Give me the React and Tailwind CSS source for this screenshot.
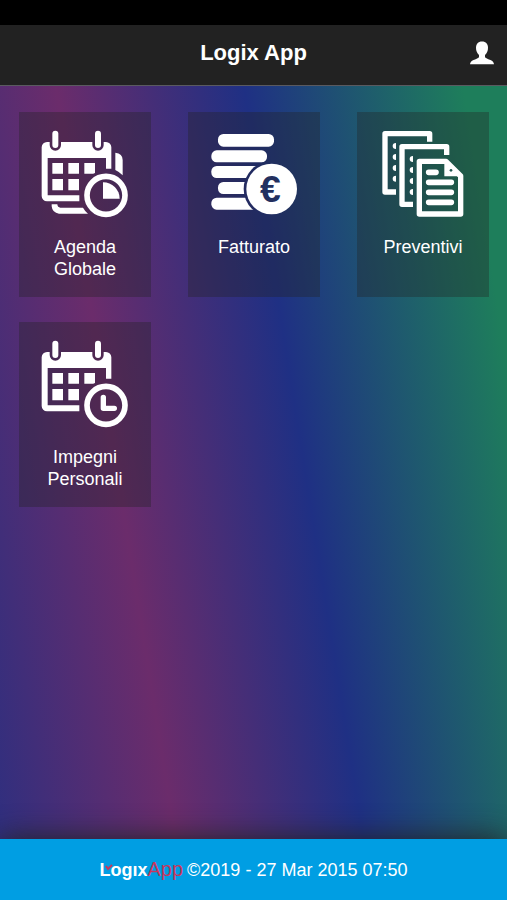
import React from "react";

const tiles = [
  { id: "agenda", label: "Agenda Globale", Icon: AgendaIcon },
  { id: "fatturato", label: "Fatturato", Icon: CoinsIcon },
  { id: "preventivi", label: "Preventivi", Icon: DocsIcon },
  { id: "impegni", label: "Impegni Personali", Icon: TasksIcon },
];

function CalendarBody({ maskId }) {
  return (
    <>
      {/* gaps around the rings and the clock */}
      <mask id={maskId}>
        <rect width="264" height="264" fill="white" />
        <rect x="26" y="-10" width="34" height="72" rx="17" fill="black" />
        <rect x="154" y="-10" width="34" height="72" rx="17" fill="black" />
        <circle cx="195" cy="196" r="75" fill="black" />
      </mask>
      <g mask={`url(#${maskId})`}>
        <path
          fillRule="evenodd"
          d="M18 36H195a16 16 0 0 1 16 16V116H195V84H20V196H115V214H18a16 16 0 0 1-16-16V52a16 16 0 0 1 16-16z"
        />
        <path d="M34 99h32v32h-32zM82 99h32v32h-32zM130 99h32v32h-32zM34 147h32v34h-32zM82 147h32v34h-32z" />
      </g>
      <rect x="34" y="2" width="18" height="52" rx="9" />
      <rect x="162" y="2" width="18" height="52" rx="9" />
      <circle cx="195" cy="196" r="57" fill="none" stroke="currentColor" strokeWidth="17" />
    </>
  );
}

function AgendaIcon() {
  return (
    <svg viewBox="0 0 264 264" className="size-[88px]" fill="currentColor" aria-hidden="true">
      <CalendarBody maskId="agenda-cut" />
      <path d="M223 68q22 2 22 22v46q-9-10-22-16z" />
      <path d="M32 223h17q1 10 9 10h68q6 11 15 18H54q-20-2-22-22z" />
      <path d="M186 157a49 49 0 0 1 50 49h-50z" />
    </svg>
  );
}

function TasksIcon() {
  return (
    <svg viewBox="0 0 264 264" className="size-[88px]" fill="currentColor" aria-hidden="true">
      <CalendarBody maskId="tasks-cut" />
      <path
        d="M187 172v33h33"
        fill="none"
        stroke="currentColor"
        strokeWidth="16"
        strokeLinecap="round"
        strokeLinejoin="round"
      />
    </svg>
  );
}

function CoinsIcon() {
  return (
    <svg viewBox="0 0 264 264" className="size-[88px]" fill="currentColor" aria-hidden="true">
      <mask id="coins-cut">
        <rect width="264" height="264" fill="white" />
        <circle cx="185" cy="177" r="84" fill="black" />
      </mask>
      <g mask="url(#coins-cut)">
        <rect x="24" y="12" width="168" height="38" rx="16" />
        <rect x="4" y="61" width="167" height="36" rx="16" />
        <rect x="4" y="108" width="167" height="36" rx="16" />
        <rect x="24" y="156" width="167" height="36" rx="16" />
        <rect x="4" y="203" width="167" height="36" rx="16" />
      </g>
      <circle cx="185" cy="177" r="76" />
      <text
        x="181"
        y="216"
        textAnchor="middle"
        fontSize="112"
        fontWeight="bold"
        fontFamily="Liberation Sans, sans-serif"
        fill="#23305f"
      >
        €
      </text>
    </svg>
  );
}

function DocsIcon() {
  return (
    <svg viewBox="0 0 264 264" className="size-[88px]" fill="currentColor" aria-hidden="true">
      <g fill="none" stroke="currentColor" strokeWidth="16" strokeLinejoin="round">
        <path d="M152 35V11H18V186H51" />
        <path d="M203 75V50H69V223H102" />
        <path d="M121 94H201L245 138V252H121z" />
        <path d="M149 127h22M149 157h68M149 187h68M149 217h68" strokeWidth="17" strokeLinecap="round" />
      </g>
      <path d="M51 39a10 9 0 0 0 0 18zM51 72a10 9 0 0 0 0 18zM51 105a10 9 0 0 0 0 18zM51 137a10 9 0 0 0 0 18z" />
      <path d="M102 78a10 9 0 0 0 0 18zM102 111a10 9 0 0 0 0 18zM102 144a10 9 0 0 0 0 18zM102 177a10 9 0 0 0 0 18z" />
      <path d="M198 92V137H246z" stroke="currentColor" strokeWidth="4" />
      <circle cx="216" cy="121" r="4" fill="#215750" />
    </svg>
  );
}

function UserIcon() {
  return (
    <svg viewBox="0 0 24 24" className="size-6" fill="currentColor" aria-hidden="true">
      <path d="M12 .5C8 .5 6 3 6 6.800c0 3 1 5.500 3 7.200v2.200c-1 1.300-3.500 2-5.500 2.800C1.300 20 .2 21.300 0 23.300h24c-.2-2-1.300-3.300-3.500-4.300-2-.8-4.500-1.500-5.500-2.800V14c2-1.700 3-4.200 3-7.200C18 3 16 .5 12 .5z" />
    </svg>
  );
}

export default function App() {
  return (
    <div className="flex min-h-screen flex-col bg-black font-['Liberation_Sans',Arial,sans-serif] text-white">
      <header className="border-b border-[#5a5a60] bg-[#222]">
        <div className="h-[25px] bg-black" />
        <div className="grid h-[60px] grid-cols-[1fr_auto_1fr] items-center px-[13px] pb-1">
          <h1 className="col-start-2 text-[22px] leading-6 font-bold">Logix App</h1>
          <button type="button" aria-label="Profilo" className="cursor-pointer justify-self-end">
            <UserIcon />
          </button>
        </div>
      </header>

      <main className="flex-1 bg-[linear-gradient(81deg,#2c2f80_-2%,#6b2c6b_28%,#1f3084_58%,#1e7e5b_93%)] pt-[26px] pr-[18px] pb-12 pl-[19px]">
        <nav className="grid grid-cols-3 gap-x-[37px] gap-y-[25px]">
          {tiles.map(({ id, label, Icon }) => (
            <a
              key={id}
              href={`#${id}`}
              className="flex flex-col items-center gap-[18px] bg-[#222]/35 px-5 pt-[18px] pb-[17px] text-center text-[18px] leading-[22px]"
            >
              <Icon />
              <span className="min-h-[44px]">{label}</span>
            </a>
          ))}
        </nav>
      </main>

      <footer className="relative flex h-[61px] items-center justify-center gap-1 bg-[#009ee3] text-[18px] leading-[22px] shadow-[0_0_30px_#222]">
        <span className="relative flex items-baseline">
          <b>Logıx</b>
          <span className="text-[20px] text-[#c8365c]">App</span>
          <svg viewBox="0 0 8 8" className="absolute top-1.5 left-1.5 size-2" aria-hidden="true">
            <path d="M1 2l2 3 4-4" fill="none" stroke="#c8365c" strokeWidth="2" />
          </svg>
        </span>
        <span>©2019 - 27 Mar 2015 07:50</span>
      </footer>
    </div>
  );
}
